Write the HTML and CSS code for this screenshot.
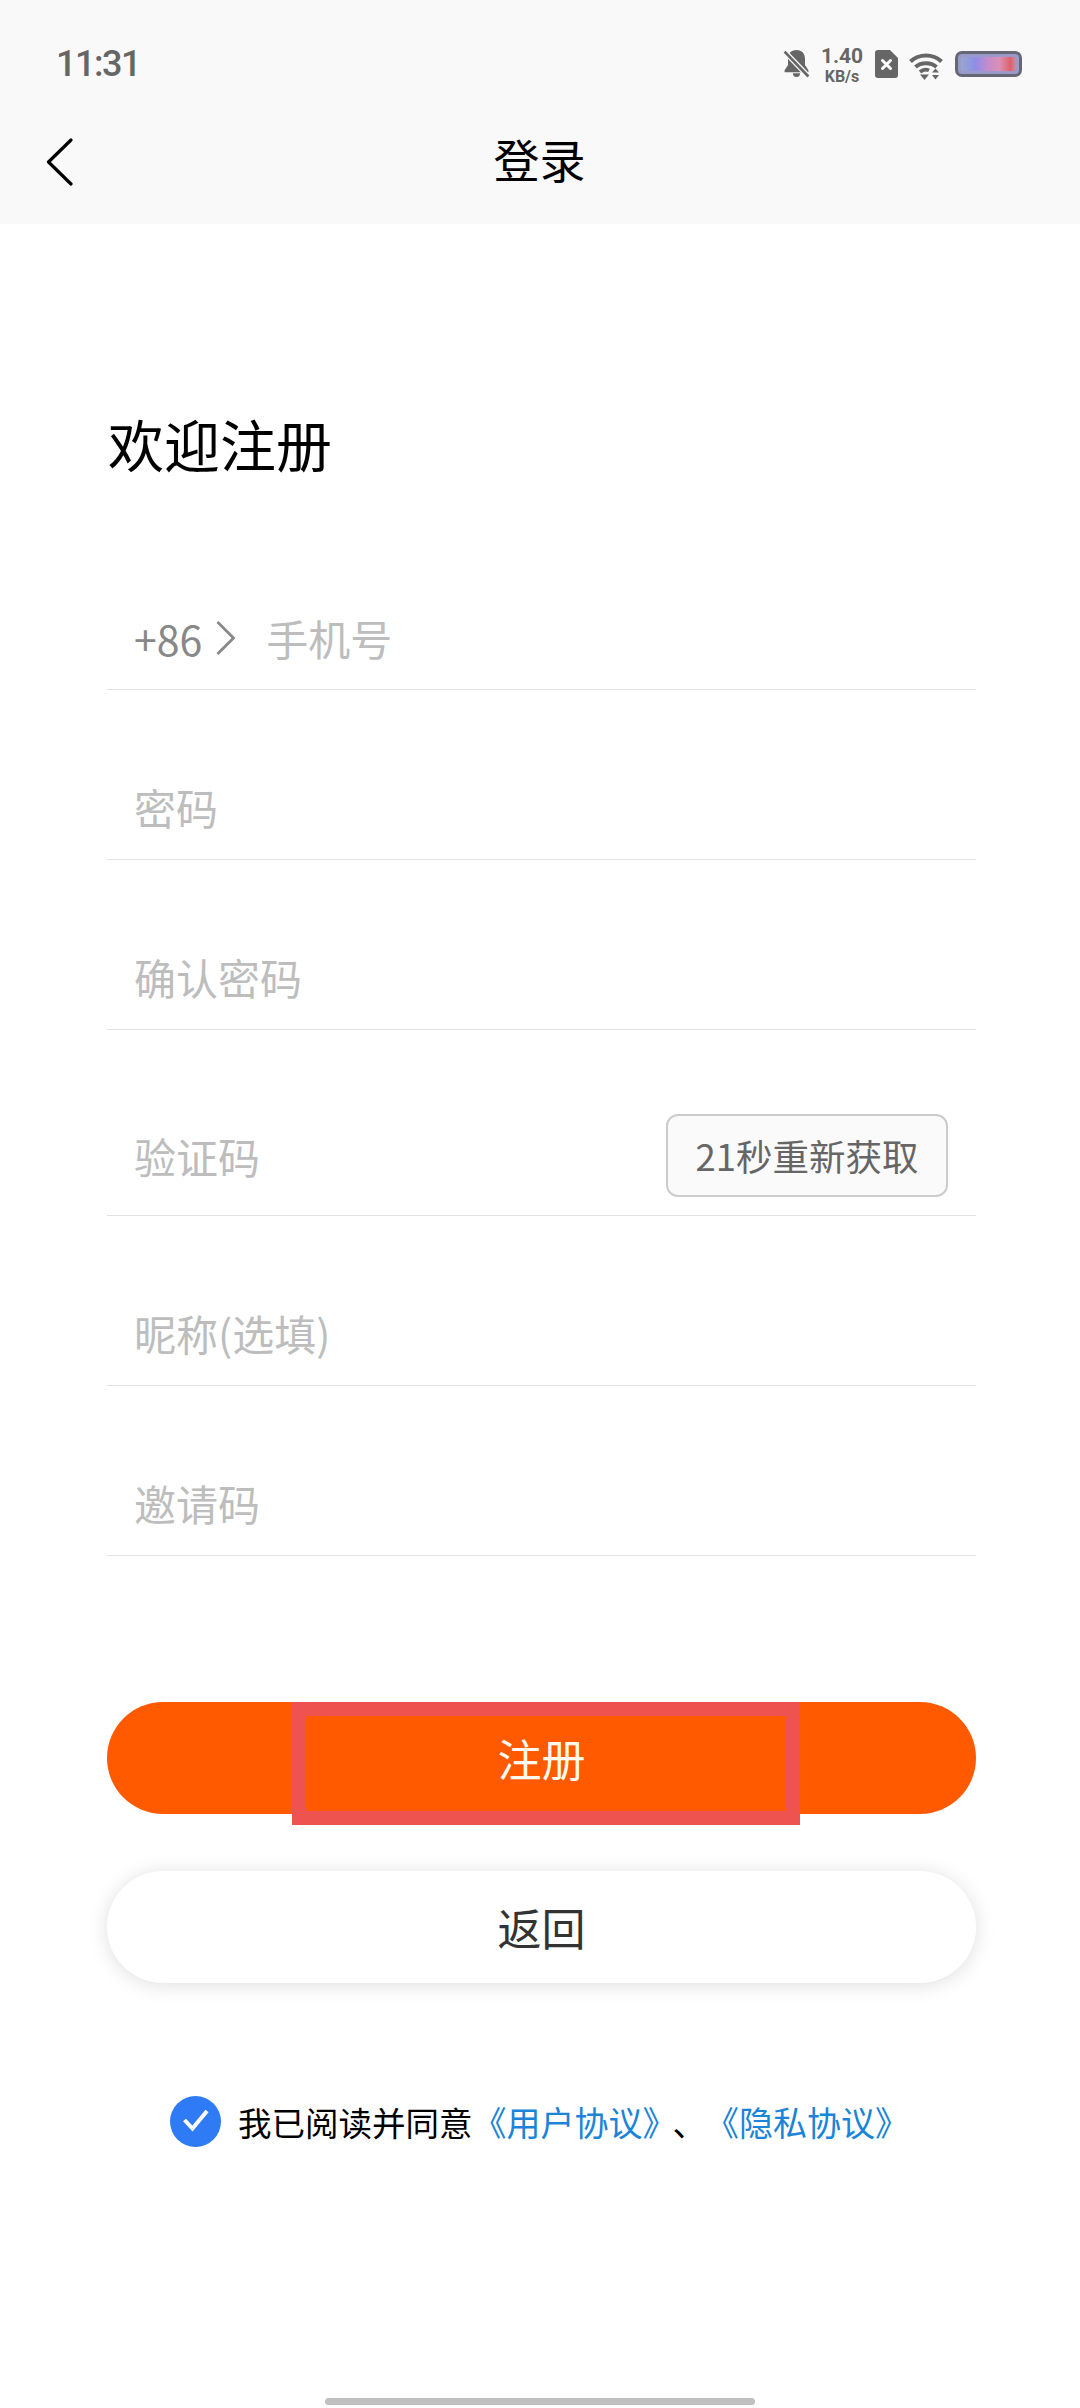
FILE: index.html
```html
<!DOCTYPE html>
<html lang="zh-CN">
<head>
  <meta charset="UTF-8" />
  <meta name="viewport" content="width=device-width, initial-scale=1" />
  <title>欢迎注册</title>
  <link rel="stylesheet" href="styles.css">
</head>
<body>

  <header class="top-bar">
    <div class="status-bar">
      <span class="time">11:31</span>
      <div class="status-icons">
        <svg class="icon-bell" viewBox="0 0 26 28" width="27" height="29">
          <path d="M13 1c-5.5 0-8.2 3.8-8.2 8.7v5.800L1.500 20.500v2h23v-2l-3.300-5V9.700C21.200 4.800 18.500 1 13 1z" fill="#666"/>
          <path d="M9.500 23.500h7a3.500 3.500 0 0 1-7 0z" fill="#666"/>
          <path d="M1.500 2.500 24.500 26.500" stroke="#f9f9f9" stroke-width="5"/>
          <path d="M1.500 2.500 24.500 26.500" stroke="#666" stroke-width="2.6"/>
        </svg>
        <div class="speed">
          <span class="speed-num">1.40</span>
          <span class="speed-unit">KB/s</span>
        </div>
        <svg class="icon-sim" viewBox="0 0 23 28" width="23" height="28">
          <path d="M3 0h12l8 8v17a3 3 0 0 1-3 3H3a3 3 0 0 1-3-3V3a3 3 0 0 1 3-3z" fill="#666"/>
          <path d="M7.500 10.500l8 8M15.500 10.500l-8 8" stroke="#fff" stroke-width="3" stroke-linecap="round"/>
        </svg>
        <svg class="icon-wifi" viewBox="0 0 34 28" width="34" height="28">
          <path d="M1.500 9.500C10 1.500 24 1.500 32.500 9.500" fill="none" stroke="#666" stroke-width="4"/>
          <path d="M6.500 15C12 10 22 10 27.500 15" fill="none" stroke="#666" stroke-width="4"/>
          <path d="M11 20c3-2.600 6.500-2.800 9-1.600" fill="none" stroke="#666" stroke-width="3.8"/>
          <path d="M11 22.500h9L15.500 28z" fill="#666"/>
          <path d="M26.500 16.500l3.500 4h-7zM26.500 27.500l-3.500-4.500h7z" fill="#666"/>
        </svg>
        <div class="battery"><div class="battery-fill"></div></div>
      </div>
    </div>
    <div class="nav-bar">
      <svg class="nav-back" viewBox="0 0 27 48" width="27" height="48">
        <path d="M25 2 2.500 24 25 46" fill="none" stroke="#000" stroke-width="3.2" stroke-linecap="round" stroke-linejoin="round"/>
      </svg>
      <h1 class="nav-title">登录</h1>
    </div>
  </header>

  <main class="content">
    <h2 class="welcome">欢迎注册</h2>

    <div class="field field-phone">
      <span class="area-code">+86</span>
      <svg class="area-arrow" viewBox="0 0 19 34" width="19" height="34">
        <path d="M1.500 1 17.500 17 1.500 33" fill="none" stroke="#888" stroke-width="2.8"/>
      </svg>
      <span class="hint">手机号</span>
    </div>
    <div class="field"><span class="hint">密码</span></div>
    <div class="field"><span class="hint">确认密码</span></div>
    <div class="field field-code">
      <span class="hint">验证码</span>
      <span class="code-btn">21秒重新获取</span>
    </div>
    <div class="field"><span class="hint">昵称(选填)</span></div>
    <div class="field"><span class="hint">邀请码</span></div>

    <div class="btn btn-primary">
      注册
      <span class="mark-box"></span>
    </div>
    <div class="btn btn-back">返回</div>

    <div class="agree">
      <svg class="agree-check" viewBox="0 0 51 51" width="51" height="51">
        <circle cx="25.5" cy="25.5" r="25.5" fill="#2f7bf6"/>
        <path d="M14.500 24l8 8.500L37 15" fill="none" stroke="#fff" stroke-width="4"/>
      </svg>
      <span class="agree-text">我已阅读并同意<a class="agree-link">《用户协议》</a><span class="agree-sep">、</span><a class="agree-link">《隐私协议》</a></span>
    </div>
  </main>

  <div class="home-bar"></div>

</body>
</html>
```

FILE: styles.css
```css
* {
  box-sizing: border-box;
}

body {
  margin: 0;
  width: 1080px;
  height: 2408px;
  background: #fff;
  display: flex;
  flex-direction: column;
  overflow: hidden;
  font-family: "Noto Sans CJK SC", "Noto Sans", sans-serif;
}

/* Barra superior */
.top-bar {
  height: 224px;
  background: #f9f9f9;
}

.status-bar {
  height: 124px;
  padding: 46px 58px 0 56px;
  display: flex;
  justify-content: space-between;
  align-items: flex-start;
}

.time {
  font-family: Roboto, sans-serif;
  font-size: 36px;
  font-weight: 500;
  line-height: 36px;
  letter-spacing: -1.5px;
  color: #666;
}

.status-icons {
  display: flex;
  align-items: flex-start;
  height: 40px;
}

.icon-bell {
  margin: 3px 10px 0 0;
}

.speed {
  display: flex;
  flex-direction: column;
  align-items: center;
  width: 44px;
  margin-right: 11px;
  color: #666;
  font-family: Roboto, sans-serif;
  font-weight: 700;
}

.speed-num {
  font-size: 21px;
  line-height: 21px;
}

.speed-unit {
  font-size: 16px;
  line-height: 16px;
  margin-top: 2px;
}

.icon-sim {
  margin: 4px 11px 0 0;
}

.icon-wifi {
  margin: 6px 12px 0 0;
}

.battery {
  width: 67px;
  height: 26px;
  margin-top: 5px;
  padding: 3px;
  border: 3px solid #667;
  border-radius: 7px;
  background: #9a9ac8;
}

.battery-fill {
  height: 100%;
  border-radius: 3px;
  background: linear-gradient(90deg, #97a6cf 0%, #8d8ee6 25%, #c68ccc 50%, #d98fb5 70%, #e0606e 90%, #c8909c 100%);
}

.nav-bar {
  height: 100px;
  padding-left: 45px;
  position: relative;
  display: flex;
  align-items: flex-start;
  justify-content: center;
}

.nav-back {
  position: absolute;
  left: 46px;
  top: 14px;
}

.nav-title {
  margin: 1px 0 0;
  font-size: 46px;
  font-weight: 400;
  line-height: 66px;
  color: #000;
  transform: translateX(-23px);
}

/* Formulario */
.content {
  padding: 0 104px 0 107px;
  flex: 1;
}

.welcome {
  margin: 178px 0 36px 1px;
  height: 82px;
  font-size: 56px;
  font-weight: 400;
  line-height: 82px;
  color: #000;
}

.field {
  height: 170px;
  padding: 0 0 26px 27px;
  border-bottom: 1.5px solid #e2e2e2;
  display: flex;
  align-items: flex-end;
}

.field-phone {
  padding-bottom: 25px;
}

.field-code {
  height: 186px;
  justify-content: space-between;
  padding: 0 28px 18px 27px;
}

.field-code .hint {
  margin-bottom: 15px;
}

.hint {
  font-size: 42px;
  line-height: 52px;
  color: #bdbdbd;
}

.area-code {
  font-size: 41px;
  line-height: 52px;
  color: #888;
}

.area-arrow {
  margin: 0 31px 9px 14px;
}

.code-btn {
  width: 282px;
  height: 83px;
  border: 2px solid #ccc;
  border-radius: 12px;
  background: #fafafa;
  color: #666;
  font-size: 36.5px;
  display: flex;
  align-items: center;
  justify-content: center;
}

.btn {
  height: 112px;
  border-radius: 56px;
  font-size: 44px;
  display: flex;
  align-items: center;
  justify-content: center;
}

.btn-primary {
  margin-top: 146px;
  position: relative;
  background: #ff5a00;
  color: #fff8ee;
}

/* Recuadro rojo encima del boton */
.mark-box {
  position: absolute;
  left: 185px;
  top: 0;
  width: 508px;
  height: 123px;
  border: 14px solid #ef5350;
}

.btn-back {
  margin-top: 57px;
  background: #fff;
  color: #333;
  box-shadow: 0 2px 20px rgba(0, 0, 0, 0.13);
}

.agree {
  margin: 113px 0 0 63px;
  display: flex;
  align-items: center;
  gap: 17px;
}

.agree-text {
  font-size: 33.5px;
  line-height: 51px;
  color: #000;
  white-space: nowrap;
}

.agree-link {
  font-size: 34px;
  color: #1a84d8;
}

.agree-sep {
  margin: 0 16px 0 13px;
}

.home-bar {
  width: 430px;
  height: 7px;
  margin: 0 auto 3px;
  border-radius: 4px;
  background: #c0c0c0;
}
```
